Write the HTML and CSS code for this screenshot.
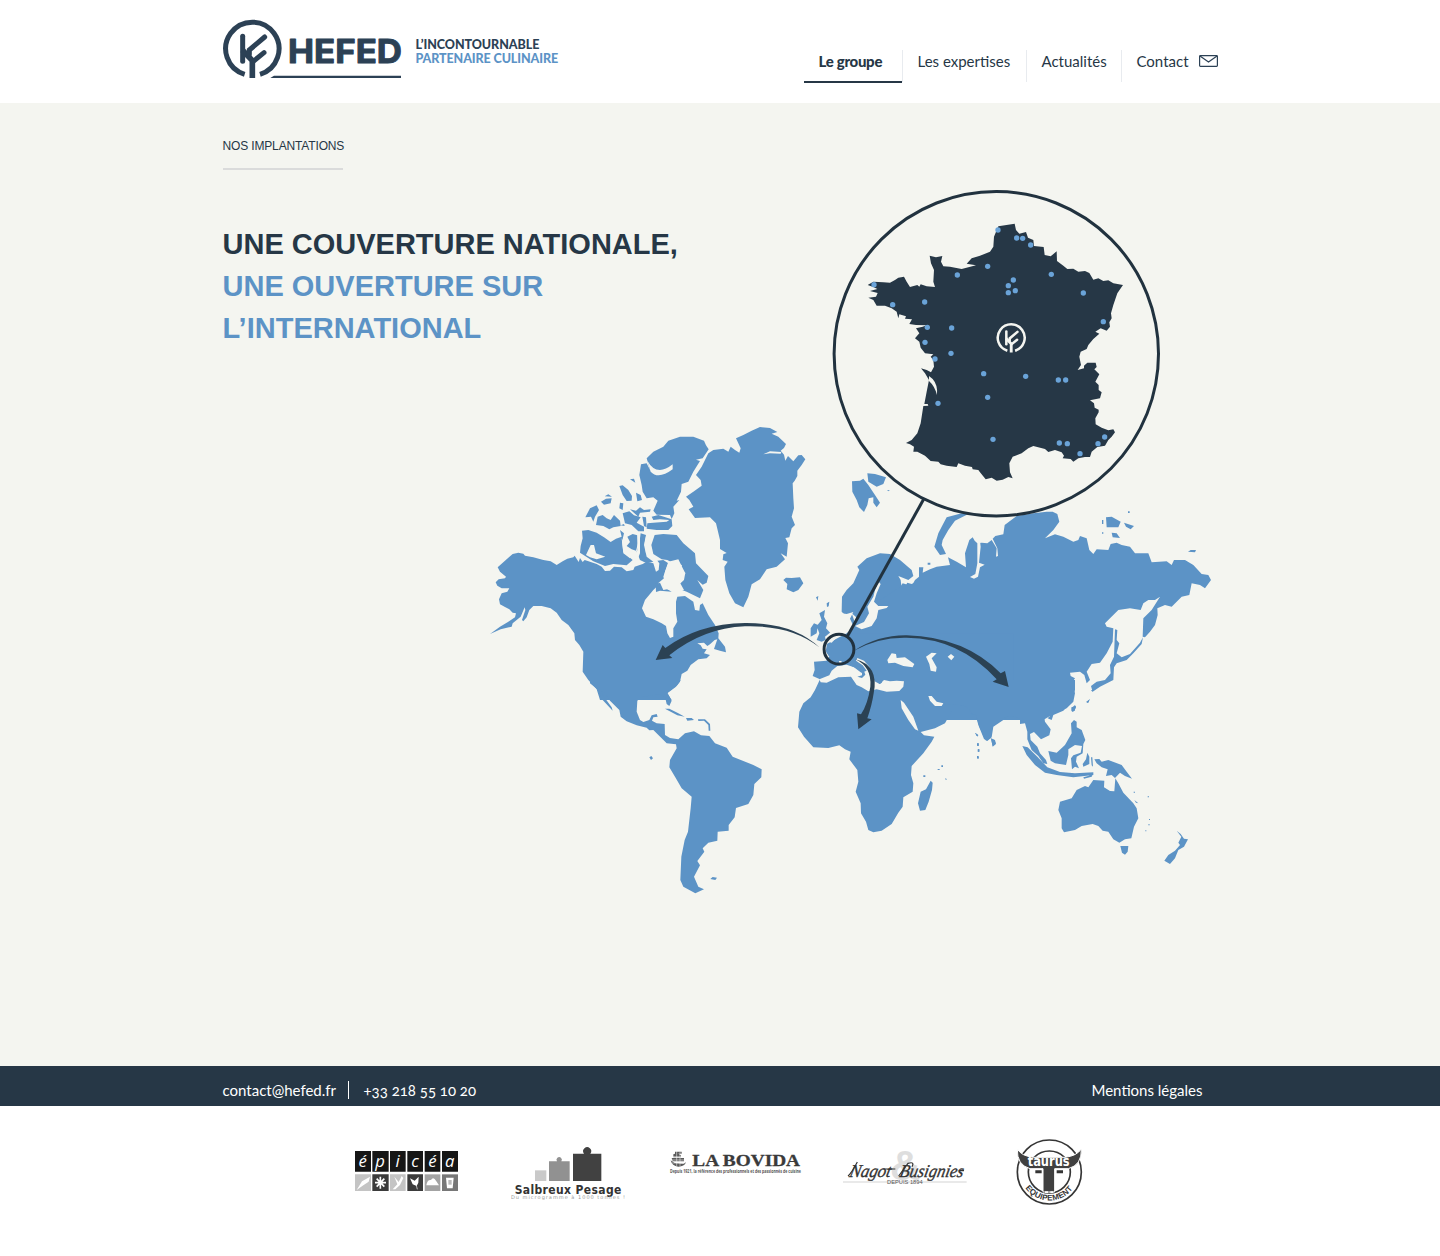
FILE: index.html
```html
<!DOCTYPE html>
<html lang="fr">
<head>
<meta charset="utf-8">
<title>Hefed – Nos implantations</title>
<link rel="stylesheet" href="styles.css">
</head>
<body>
<header class="header">
  <div class="wrap header-row">
    <a class="brand">
      <svg class="brand-logo" viewBox="39 60 534 174">
        <defs>
          <g id="emblem" fill="none" stroke="currentColor" stroke-width="15">
            <path d="M104 223A80 80 0 1 1 150 223"/>
            <path d="M127 234V182L97 150" stroke-width="17"/>
            <path d="M98 109V184" stroke-linecap="round"/>
            <path d="M118 163V150L164 111M130 184L162 158" stroke-linecap="round"/>
          </g>
        </defs>
        <use href="#emblem"/>
        <text class="wordmark" x="234" y="189" textLength="342" lengthAdjust="spacingAndGlyphs">HEFED</text>
        <path d="M181 234L192 227H573V234Z" fill="currentColor"/>
      </svg>
      <span class="tagline"><span class="tag-a">L’INCONTOURNABLE</span><span class="tag-b">PARTENAIRE CULINAIRE</span></span>
    </a>
    <nav class="nav">
      <a class="nav-item nav-active">Le groupe</a>
      <a class="nav-item nav-expertises">Les expertises</a>
      <a class="nav-item nav-news">Actualités</a>
      <a class="nav-item nav-contact">Contact
        <svg class="mail" viewBox="0 0 19 12"><rect x=".6" y=".6" width="17.8" height="10.8" rx=".8"/><path d="M1 1L9.5 7L18 1"/></svg>
      </a>
    </nav>
  </div>
</header>

<main class="main">
  <div class="wrap stage">
    <div class="intro">
      <h2 class="kicker">NOS IMPLANTATIONS</h2>
      <h1 class="title"><span class="t1">UNE COUVERTURE NATIONALE,</span><span class="t2">UNE OUVERTURE SUR</span><span class="t3">L’INTERNATIONAL</span></h1>
    </div>
    <svg class="map" viewBox="480 180 740 730">
      <!-- North America and the Arctic islands -->
      <g transform="translate(480 420) scale(.33333)" class="land">
        <path d="M30 642L60 620 85 605 105 592 108 580 98 578 88 568 75 561 60 553 57 538 65 520 82 515 88 505 65 505 52 497 47 487 56 478 75 475 78 470 60 455 53 442 75 422 98 402 115 398 130 401 135 407 160 412 190 420 212 424 230 435 248 424 262 416 280 412 284 407 296 426 300 414 308 426 314 420 330 425 350 432 365 440 375 453 390 452 402 440 425 442 440 454 460 450 464 440 488 432 500 425 520 430 528 455 536 450 538 430 532 422 550 420 565 430 555 455 552 475 536 488 530 500 520 510 495 540 486 565 498 590 520 598 545 610 558 618 562 640 570 654 580 650 580 625 592 605 588 580 588 545 592 530 615 528 640 545 645 570 658 572 660 555 668 550 685 585 705 615 716 640 715 655 735 680 738 697 720 692 702 687 712 658 704 660 690 673 682 678 672 668 652 670 662 676 668 686 680 688 672 700 690 705 680 715 655 718 632 735 622 752 605 762 600 785 588 800 562 820 575 840H360L350 808 325 780 308 755 310 695 298 675 285 660 283 640 265 615 245 600 230 578 212 565 185 558 160 558 148 570 140 592 130 604 126 600 136 570 134 562 122 590 98 610 95 620 62 628Z"/>
        <path d="M500 115L520 95 550 80 565 62 600 50 640 50 672 62 678 76 686 88 668 115 648 119 660 123 640 155 625 185 605 192 603 215 590 242 598 240 580 260 583 280 575 297 570 285 530 284 520 272 533 242 520 232 500 235 488 215 485 195 478 165 483 133 500 130 510 150Z"/>
        <path d="M306 332L325 330 350 338 372 352 392 366 408 356 425 350 420 330 432 340 426 365 430 395 440 405 458 420 440 436 400 432 375 438 340 424 300 398 302 378 308 355Z"/>
        <path d="M442 350L458 342 472 346 474 370 468 392 455 388 440 378 450 366ZM482 340L498 345 492 375 500 410 520 425 500 430 480 420 470 395 478 370Z"/>
        <path d="M524 345L550 342 590 345 610 370 645 400 648 430 685 468 680 488 668 494 652 480 670 510 660 535 620 515 600 508 590 500 612 480 616 458 598 455 606 435 580 430 562 420 545 418 520 402 514 375Z"/>
        <path d="M527 492L540 488 550 510 562 508 575 515 540 512 528 516Z"/>
        <path d="M316 292L330 265 350 256 357 270 345 290 340 305 333 290ZM353 290L368 285 380 295 392 300 402 285 420 302 422 318 400 322 388 328 370 318 348 315ZM363 245L378 236 395 235 392 250 372 254ZM374 229L385 223 396 230ZM418 198L428 196 445 210 456 228 455 242 440 243 428 225ZM450 178L462 176 466 188ZM468 218L482 225 486 240 472 244ZM420 248L430 250 428 270 418 265ZM428 280L448 274 462 286 482 292 470 308 492 320 492 334 475 334 455 315 435 310ZM450 268L468 272 480 262 492 270 512 268 510 275 480 278 475 290ZM422 316l10 -4 2 6ZM487 290L498 292 500 322 492 318ZM515 290L535 285 575 298 577 318 565 330 530 330 500 326 502 310 520 308 560 305 568 300 540 298 520 300Z"/>
      </g>
      <g transform="translate(480 420) scale(.33333)" class="water">
        <path d="M502 122Q530 172 578 133L578 148Q535 180 512 155ZM318 405L332 375 342 375 348 400 376 410 350 418 330 412ZM500 338L512 345 500 380 515 410 535 425 520 420 498 400 494 370ZM425 355L435 375 445 395 460 400 450 415 430 400ZM472 345L480 345 480 400 470 425 462 425 472 390ZM550 470L565 425 595 418 606 440 616 460 600 488 612 510 590 515 562 508Z"/>
        <path d="M480 250l20 -4 -4 8ZM506 256l5 -5 4 7Z"/>
      </g>
      <!-- Greenland, Iceland, Svalbard, British Isles, western Europe -->
      <g transform="translate(660 420) scale(.33333)" class="land">
        <path d="M108 165L125 140 145 100 160 90 190 86 205 95 212 80 225 90 238 98 242 85 228 55 250 45 275 32 300 21 330 24 352 36 335 41 355 50 378 72 372 84 362 92 372 104 376 122 384 108 400 124 415 106 425 105 436 118 425 135 412 152 412 168 404 182 398 190 400 235 402 265 395 290 405 315 395 325 388 352 376 354 384 370 380 410 362 400 375 418 350 440 320 448 300 478 275 493 265 530 250 562 225 550 208 520 196 480 193 440 203 425 188 420 190 403 200 399 180 387 180 360 168 310 150 292 105 294 86 268 100 260 88 240 78 230 100 215 125 197 122 180Z"/>
        <path d="M370 480L378 473 395 474 420 472 430 490 415 510 400 517 380 508 382 492ZM576 184L600 182 610 176 625 195 645 225 660 248 650 262 640 248 640 232 626 235 622 255 612 276 598 262 590 240 577 215ZM622 160L645 162 678 172 670 192 650 200 625 185ZM682 210l8 1 -6 3ZM468 532l7 -4 -2 14ZM500 550l8 -5 -2 14 -5 2Z"/>
        <path d="M478 580L495 570 492 590 502 610 498 625 512 640 508 655 485 665 470 660 478 640 470 618 485 600ZM452 625L462 610 474 615 470 640 452 650Z"/>
        <path d="M545 575L546 530 560 510 580 490 598 450 592 440 620 415 660 400 690 402 720 420 755 450 760 468 745 480 715 468 722 480 725 505 735 500 742 488 755 492 780 480V700H495L505 662 525 655 545 640 560 640 562 600 555 585Z"/>
      </g>
      <!-- Russia and northern Asia -->
      <g transform="translate(900 500) scale(.33333)" class="land">
        <path d="M-60 300L0 262 8 250 35 258 45 240 57 230 57 202 70 202 68 218 90 208 110 200 150 195 144 172 170 185 198 202 195 160 208 120 218 112 224 122 232 130 245 128 262 130 275 120 290 145 288 170 294 168 292 145 278 116 286 108 310 103 314 75 350 48 400 40 440 35 458 35 472 42 478 65 460 90 435 115 465 103 490 110 520 125 535 120 540 108 560 115 568 150 580 162 590 148 625 150 632 132 650 128 665 135 690 140 705 160 745 160 755 187 800 184 815 195 822 180 855 180 880 195 905 222 925 225 933 240 915 265 900 255 875 250 868 285 845 290 815 320 795 315 772 325 773 345 765 375 750 395 735 412 728 410 730 355 755 330 780 290 765 300 745 300 730 310 722 330 690 325 655 330 615 370 620 380 640 385 638 425 620 460 600 488 575 492 560 515 570 540 560 550 553 525 540 515 510 518 512 528 525 535 515 550 525 580 520 605 500 625 455 645 430 660H-60Z"/>
        <path d="M645 388L652 390 650 420 658 430 650 460 665 472 690 462 720 428 729 412 725 432 700 460 680 480 650 490 642 502 640 540 600 560 578 575 573 558 590 545 615 540 632 520 630 495 642 470Z"/>
        <path d="M205 42L165 62 145 90 128 120 125 135 138 162 120 165 103 140 115 100 125 80 140 52 185 40ZM83 188h8v6h-8ZM618 52L635 50 662 65 655 82 620 82ZM672 68L702 78 692 88 678 80ZM684 34h5v5h-5ZM606 60h4v12h-4ZM635 98L650 100 660 114 638 112ZM606 97h4v4h-4ZM864 155L872 150 888 150 885 157ZM514 622L528 618 524 632 516 636ZM558 606L569 598 564 608Z"/>
      </g>
      <!-- Africa, Middle East, India -->
      <g transform="translate(780 640) scale(.33333)" class="land">
        <path d="M102 65L104 90 98 108 120 118 105 150 92 172 70 190 58 215 54 262 72 290 100 322 145 324 178 316 195 328 212 335 208 358 232 390 235 425 227 455 242 490 243 520 258 545 265 570 280 577 305 572 335 552 355 518 368 500 370 472 398 455 400 430 393 405 395 378 430 340 455 305 463 290 432 286 422 276 465 265 495 250 514 215 490 192 550 196 575 222 587 225 595 255 612 297 622 303 635 292 640 260 700 220V-20H180L140 10 140 62Z"/>
        <path d="M452 422L458 428 456 450 446 485 436 510 420 512 414 490 422 455 438 448ZM633 295L645 300 648 312 638 320ZM585 278L595 285 592 290ZM591 310h5v7h-5ZM593 328h5v7h-5ZM591 348h5v7h-5ZM430 406h6v5h-6ZM473 387h6v3h-6ZM484 376h5v5h-5ZM496 414l5 4 -4 2Z"/>
      </g>
      <!-- Central and South America -->
      <g transform="translate(590 680) scale(.33333)" class="land">
        <path d="M0 0V10L22 28 28 42 38 60 68 92 65 82 38 45 35 34 42 36 60 62 88 90 92 110 110 124 140 136 170 143 178 151 190 150 212 172 230 190 258 193 260 205 240 240 238 262 255 290 275 325 305 350 302 385 294 455 284 480 274 530 271 600 280 620 316 640 342 628 325 620 312 590 330 556 322 543 343 515 338 505 355 488 382 482 383 455 416 452 416 435 434 412 438 384 475 372 490 345 493 312 514 292 515 268 490 255 428 230 410 203 375 190 358 168 333 166 312 154 285 160 265 178 240 174 225 165 224 132 200 130 186 122 190 112 203 110 200 102 185 106 178 120 160 126 150 120 140 95 142 62 155 50 180 47 205 42 225 50 230 72 238 78 245 62 232 38 262 15 272 0Z"/>
        <path d="M225 86L238 86 265 100 284 110 262 106ZM288 114L305 114 312 120 292 122ZM324 118L345 118 360 132 361 152 356 152 355 135 342 122 325 123ZM178 232l6 -4 5 7 -6 5ZM361 597L368 591 381 593 376 600Z"/>
      </g>
      <!-- South-East Asia and Oceania -->
      <g transform="translate(960 690) scale(.33333)" class="land">
        <path d="M0 -30V45L20 50 38 72 48 75 58 110 78 152 92 145 98 108 140 80 165 78 180 88 180 102 195 100 202 125 202 148 215 180 235 198 250 220 262 222 258 210 240 190 232 170 212 150 210 132 222 126 243 148 268 136 272 118 255 95 252 78 265 72 270 78 263 85 275 90 280 75 310 62 335 35 345 0 345 -30Z"/>
        <path d="M187 168L203 172 232 200 262 232 300 246 345 250 400 247 400 255 340 262 290 255 255 248 225 225 200 195ZM265 183L290 188 315 165 335 130 333 100 342 90 350 95 350 112 365 120 376 150 370 162 368 190 350 200 348 215 357 235 345 230 336 238 333 205 340 196 362 188 366 168 345 165 325 178 325 195 318 225 285 220 272 212ZM382 188L388 200 388 222 370 230 368 222 378 208ZM393 202l4 0 2 28 -4 -4ZM370 262L398 254 395 260 372 266Z"/>
        <path d="M403 208L418 207 425 215 445 210 485 225 500 245 516 266 495 258 480 248 465 264 455 255 438 258 443 238 425 232 410 220Z"/>
        <path d="M300 335L335 325 350 300 375 288 385 292 400 270 433 272 432 292 450 303 463 304 466 265 475 280 490 308 520 340 530 355 535 385 522 410 514 445 495 448 478 458 460 448 445 425 428 422 415 408 398 402 365 408 345 420 312 427 305 415 305 385 295 360Z"/>
        <path d="M481 468L505 468 503 485 495 494 486 488ZM650 422L662 432 672 446 684 448 672 470 655 480 645 505 630 522 613 512 625 495 645 482 660 465 655 458 664 440ZM335 55L345 45 348 52 342 64 334 62ZM380 38L390 26 385 38ZM393 0h10l-6 5ZM523 330L535 340 528 338ZM521 305h4v3h-4ZM563 319h4v3h-4ZM567 387h3v3h-3ZM565 403h4v3h-4ZM556 421h3v3h-3ZM93 146L102 150 107 160 98 168ZM45 128L55 136 50 138ZM52 160h4v8h-4ZM54 178h4v7h-4ZM52 200h4v6h-4Z"/>
      </g>
      <!-- Seas and lakes cut into the land -->
      <g transform="translate(660 420) scale(.33333)" class="water">
        <path d="M655 484L662 492 650 520 642 545 655 558 685 558 680 564 655 570 650 595 635 618 605 628 585 618 598 612 612 606 627 580 622 560 640 530 645 510ZM545 580L560 582 580 576 570 596 582 622 560 640 500 672 495 650 520 630 545 620ZM575 580l14 12 -4 16ZM310 103L330 94 364 96 362 101 330 100Z"/>
        <path d="M500 664L515 650 530 652 515 668ZM498 694l8 16 -4 8Z"/>
      </g>
      <g transform="translate(900 500) scale(.33333)" class="water">
        <path d="M232 130L240 122 242 140 237 188 254 194 240 202 234 230 222 236 210 231 226 222 232 190Z"/>
      </g>
      <g transform="translate(780 640) scale(.33333)">
        <path class="water" d="M118 118L148 106 155 92 172 78 200 74 222 82 244 98 260 92 248 76 228 62 232 54 252 62 268 80 272 105 286 125 300 132 312 120 330 124 350 122 372 124 370 140 358 153 320 155 290 148 265 154 245 142 230 135 213 110 175 112 140 128 122 127ZM322 60L335 40 348 42 350 54 375 52 403 72 398 82 370 78 345 68 325 70ZM438 50L455 38 470 40 455 55 470 82 468 95 452 92 448 72ZM503 50l10 -8 10 8 -9 11ZM362 180L372 188 400 230 415 272 405 268 385 240 365 205ZM445 168L455 168 470 185 490 190 485 198 465 198 450 182ZM177 63h8l-2 8h-5ZM134 32L148 50 142 55Z"/>
        <path class="land" d="M215 58L232 68 252 92 256 104 246 114 232 110 246 106 246 98 228 84 210 76ZM292 126l10 -6 4 8 -8 4Z"/>
      </g>
      <!-- Zoom lens and its connector -->
      <circle class="lens" cx="996.3" cy="353.8" r="162.2"/>
      <path class="link" d="M923.5 499.500L847 637"/>
      <circle class="origin" cx="839" cy="649.200" r="14.900"/>
      <!-- Flows out of France -->
      <g class="flow">
        <path transform="translate(660 420) scale(.33333)" d="M478 682Q400 608 255 609Q115 611 16 684L8 675-13 720 37 714 28 706Q130 624 255 619Q395 615 478 682Z"/>
        <path transform="translate(900 500) scale(.33333)" d="M-138 452Q-65 405 20 406Q195 411 302 520L315 513 326 561 278 545 290 538Q180 415 20 413Q-65 411 -138 452Z"/>
        <path transform="translate(780 640) scale(.33333)" d="M225 57Q298 76 281 160Q276 195 262 235L275 238 235 268 231 220 243 223Q264 190 271 140Q276 80 225 57Z"/>
      </g>
      <!-- France -->
      <g transform="translate(830 185) scale(.33333)">
        <path class="france" d="M505 124L554 116 558 135 568 146 588 141 594 158 610 165 612 183 641 186 644 210 662 214 680 199 681 228 700 242 712 252 730 251 745 260 765 258 778 264 790 284 805 280 820 288 835 286 850 295 879 300 862 325 850 360 843 385 845 400 838 412 840 425 830 437 812 430 796 440 808 446 790 462 775 480 770 492 752 500 748 515 753 540 743 555 762 550 762 542 772 533 797 533 800 546 793 553 808 568 796 590 806 600 806 615 815 622 810 640 780 646 792 655 794 668 806 674 806 682 796 700 797 718 815 728 835 736 850 733 855 742 845 755 835 765 825 782 802 786 785 800 780 816 765 816 745 820 730 830 722 822 698 820 702 812 695 802 675 795 655 801 645 792 610 783 595 790 575 805 548 815 538 835 540 862 548 880 535 876 518 884 500 887 485 878 467 883 450 862 445 855 428 853 426 846 405 842 385 835 380 846 350 842 332 838 325 830 302 828 285 812 262 800 250 800 252 785 240 778 228 774 245 765 262 745 272 715 280 663 295 662 293 657 283 657 290 620 297 585 285 565 273 550 290 555 303 562 312 545 310 525 302 515 310 508 285 505 272 488 268 470 255 460 268 445 258 430 278 425 290 421 258 420 238 417 246 403 225 401 228 394 208 388 205 400 200 380 185 370 165 362 140 362 130 345 115 338 138 335 143 324 120 318 142 312 130 306 113 300 130 290 160 292 180 293 195 285 205 278 222 275 230 290 240 306 262 300 268 305 272 298 290 304 315 306 310 290 312 255 303 235 299 212 318 217 337 213 333 230 340 244 360 245 395 252 438 241 410 236 425 220 450 212 480 200 490 185 492 155Z"/>
        <path class="water" d="M297 573L308 582Q324 600 321 630Q314 603 297 588Z"/>
        <g class="sites">
          <circle cx="504" cy="135" r="8"/><circle cx="560" cy="159" r="8"/><circle cx="578" cy="160" r="8"/><circle cx="602" cy="180" r="8"/><circle cx="473" cy="244" r="8"/><circle cx="382" cy="270" r="8"/><circle cx="550" cy="285" r="8"/><circle cx="535" cy="302" r="8"/><circle cx="556" cy="317" r="8"/><circle cx="535" cy="323" r="8"/><circle cx="664" cy="268" r="8"/><circle cx="760" cy="324" r="8"/><circle cx="820" cy="410" r="8"/><circle cx="132" cy="299" r="8"/><circle cx="188" cy="359" r="8"/><circle cx="284" cy="351" r="8"/><circle cx="292" cy="427" r="8"/><circle cx="365" cy="429" r="8"/><circle cx="285" cy="472" r="8"/><circle cx="363" cy="505" r="8"/><circle cx="315" cy="522" r="8"/><circle cx="461" cy="566" r="8"/><circle cx="587" cy="574" r="8"/><circle cx="685" cy="585" r="8"/><circle cx="707" cy="585" r="8"/><circle cx="473" cy="637" r="8"/><circle cx="324" cy="655" r="8"/><circle cx="489" cy="763" r="8"/><circle cx="688" cy="774" r="8"/><circle cx="712" cy="776" r="8"/><circle cx="824" cy="756" r="8"/><circle cx="804" cy="776" r="8"/><circle cx="750" cy="806" r="8"/>
        </g>
        <use class="emblem-light" href="#emblem" transform="translate(479.500 384.500) scale(.505)"/>
      </g>
    </svg>
  </div>
</main>

<div class="contact-bar">
  <div class="wrap contact-row">
    <a class="mail-link">contact@hefed.fr</a>
    <span class="phone">+33 218 55 10 20</span>
    <a class="legal">Mentions légales</a>
  </div>
</div>

<footer class="partners">
  <svg viewBox="45 27 468 201" class="epicea">
    <g fill="#161616"><path d="M45 63h48v62H45zM97 63h49v62H97zM150 63h47v62h-47zM202 63h47v62h-47zM254 63h47v62h-47zM306 63h48v62h-48z"/></g>
    <path fill="#c4c4c4" d="M45 133h48v50H45zM150 133h47v50h-47z"/>
    <path fill="#3b3b3b" d="M97 133h49v50H97zM202 133h47v50h-47z"/>
    <path fill="#a3a3a3" d="M254 133h47v50h-47z"/><path fill="#777" d="M306 133h48v50h-48z"/>
    <g class="epicea-text"><text x="68" y="112">é</text><text x="120" y="112">p</text><text x="173" y="112">i</text><text x="225" y="112">c</text><text x="277" y="112">é</text><text x="329" y="112">a</text></g>
    <g fill="#fff"><path d="M50 180L66 154 90 140 86 155 70 166ZM158 178L172 163 163 140 176 156 185 138 190 144 180 165 166 178ZM210 145L224 152 236 140 235 158 230 168 218 163ZM259 166Q262 148 273 150Q280 138 289 154L297 166ZM318 143H341L338 175H321Z"/></g>
    <path d="M121 140V176M105 158H138M110 146L133 170M133 146L110 170" stroke="#fff" stroke-width="5"/><path d="M229 166L232 178" stroke="#fff" stroke-width="2"/><path d="M325 150h10v14h-10z" fill="#bbb"/>
  </svg>
  <svg viewBox="513 27 474 201" class="salbreux">
    <path fill="#c9c9c9" d="M585 121h34v32h-34z"/>
    <path fill="#919191" d="M627 94H651A8 8 0 1 1 664 94H689V153H627Z"/>
    <path fill="#414141" d="M699 71H732A12 12 0 1 1 751 71H784V153H699Z"/>
    <text class="sal-name" x="524" y="192" textLength="320">Salbreux Pesage</text>
    <text class="sal-sub" x="513" y="208" textLength="342">Du microgramme à 1000 tonnes !</text>
  </svg>
  <svg viewBox="27 27 522 201" class="bovida">
    <path d="M32 91Q36 108 55 110Q73 110 78 97L70 101 44 99ZM40 73Q52 67 63 76V82H40ZM35 84H72V94H38ZM45 65H65V71H45Z" fill="#5a5a5a"/>
    <path d="M36 80H75M33 90H76M36 99H74M50 63V108M60 65V108" stroke="#fff" stroke-width="1.500"/>
    <text class="bov-name" x="97" y="107" textLength="323" lengthAdjust="spacingAndGlyphs">LA BOVIDA</text>
    <text class="bov-sub" x="30" y="130" textLength="393" lengthAdjust="spacingAndGlyphs">Depuis 1921, la référence des professionnels et des passionnés de cuisine</text>
  </svg>
  <svg viewBox="549 27 519 201" class="nagot">
    <text class="nag-amp" x="690" y="151" textLength="92" lengthAdjust="spacingAndGlyphs">&amp;</text>
    <path d="M549 156H920" stroke="#e2e2e2" stroke-width="4"/>
    <g class="nag-name"><text transform="translate(566 141) skewX(-12)" textLength="124" lengthAdjust="spacingAndGlyphs">Nagot</text><text transform="translate(716 141) skewX(-12)" textLength="192" lengthAdjust="spacingAndGlyphs">Busignies</text></g>
    <path d="M564 138Q574 130 592 96M670 117H706M716 138L744 100Q765 94 756 110M896 122H912" fill="none" stroke="#333" stroke-width="3.500"/>
    <text class="nag-sub" x="681" y="161" textLength="107" lengthAdjust="spacingAndGlyphs">DEPUIS 1894</text>
  </svg>
  <svg viewBox="1068 27 207 201" class="taurus">
    <defs><path id="taurus-arc" d="M1087 158A88 88 0 0 0 1249 158"/></defs>
    <circle cx="1168" cy="126" r="96" fill="#fff" stroke="#353535" stroke-width="5"/>
    <circle cx="1168" cy="126" r="63" fill="#fff" stroke="#353535" stroke-width="5"/>
    <path d="M1072 57Q1070 105 1110 116H1149V186H1184V116H1225Q1266 105 1264 57Q1250 78 1215 82H1120Q1084 78 1072 57Z" fill="#404040" stroke="#fff" stroke-width="3"/>
    <path d="M1126 121h19v9h-19zM1190 121h19v9h-19z" fill="#353535"/><path d="M1155 184h9v5h-9zM1171 184h9v5h-9z" fill="#fff"/>
    <text class="tau-name" x="1103" y="109" textLength="126" lengthAdjust="spacingAndGlyphs">taurus</text>
    <text class="tau-sub"><textPath href="#taurus-arc" startOffset="18" textLength="166">EQUIPEMENT</textPath></text>
  </svg>
</footer>
</body>
</html>
```
FILE: styles.css
```css
* { box-sizing: border-box; }
body {
  margin: 0;
  background: #fff;
  color: #263746;
  font-family: Lato, "Open Sans", sans-serif;
}
svg { display: block; }
.wrap { width: 995px; margin: 0 auto; }

.header { height: 103px; }
.header-row { display: flex; justify-content: space-between; }
.brand { display: flex; padding-top: 20px; color: #2c4155; }
.brand-logo { width: 178px; height: 58px; margin-right: 15px; overflow: visible; }
.wordmark { font: 700 98px Inter, sans-serif; fill: #2c4155; stroke: #2c4155; stroke-width: 3; stroke-linejoin: round; }
.tagline { padding-top: 18px; font-size: 12.5px; font-weight: 900; line-height: 14px; white-space: nowrap; }
.tagline span { display: block; }
.tag-a { letter-spacing: -0.05px; }
.tag-b { color: #5c93c6; letter-spacing: -0.1px; }

.nav { display: flex; padding-top: 50px; font-size: 15px; line-height: 22px; white-space: nowrap; }
.nav-item { height: 33px; padding-left: 15px; background: linear-gradient(#e8ebef, #e8ebef) right top / 1px 32px no-repeat; }
.nav-active { width: 99px; font-weight: 900; background: linear-gradient(#263746, #263746) left bottom / 98px 2px no-repeat, linear-gradient(#e8ebef, #e8ebef) right top / 1px 32px no-repeat; letter-spacing: -0.3px; }
.nav-expertises { width: 124px; }
.nav-news { width: 95px; }
.nav-contact { display: flex; width: 96px; justify-content: space-between; background: none; }
.mail { width: 19px; height: 12px; margin-top: 5px; fill: none; stroke: #2c4155; stroke-width: 1.2; }

.main { height: 963px; background: #f4f5f0; }
.stage { display: grid; grid-template-columns: 257px 1fr; }
.intro { grid-area: 1 / 1 / 2 / 3; padding-top: 35px; }
.kicker {
  width: 120px;
  height: 32px;
  margin: 0;
  border-bottom: 2px solid #dadbdb;
  font: 400 12px/17px "Liberation Sans", Arial, sans-serif;
  letter-spacing: -0.15px;
  white-space: nowrap;
}
.title { margin: 53px 0 0; font: 700 29px/42px "Liberation Sans", Arial, sans-serif; white-space: nowrap; }
.title span { display: block; }
.t2, .t3 { color: #5c93c6; }
.map { grid-area: 1 / 2 / 2 / 3; width: 740px; height: 730px; margin-top: 77px; }
.land { fill: #5c93c6; }
.water { fill: #f4f5f0; }
.france { fill: #263746; }
.sites { fill: #6aa3d8; }
.emblem-light { color: #f4f5f0; }
.lens, .origin, .link { fill: none; stroke: #21323f; stroke-width: 3; }
.flow { fill: #2b4254; }

.contact-bar { height: 40px; background: #263746; color: #fff; }
.contact-row { display: flex; padding: 15px 15px 0 0; font-size: 15px; line-height: 18px; }
.mail-link { width: 126px; border-right: 1px solid #fff; }
.phone { padding-left: 15px; font-feature-settings: "onum"; }
.legal { margin-left: auto; }

.partners { display: grid; grid-template-columns: 156px 158px 174px 173px 69px; width: 730px; height: 150px; margin: 0 auto; padding-top: 33px; }
.partners svg { width: 100%; height: 67px; }
.epicea-text { font: italic 400 50px "Open Sans", sans-serif; fill: #fff; text-anchor: middle; }
.sal-name { font: 700 36px "DejaVu Sans Condensed", "DejaVu Sans", sans-serif; fill: #333; }
.sal-sub { font: 400 15px "DejaVu Sans", sans-serif; fill: #999; }
.bov-name { font: 700 52px "Liberation Serif", serif; fill: #3a3a3a; stroke: #3a3a3a; stroke-width: 1; }
.bov-sub { font: 700 14px "Open Sans", sans-serif; fill: #555; }
.nag-amp { font: 700 130px "Liberation Sans", sans-serif; fill: #dedede; }
.nag-name { font: italic 400 54px "Liberation Serif", serif; fill: #333; stroke: #333; stroke-width: 1; }
.nag-sub { font: 400 14px "Liberation Sans", sans-serif; fill: #555; }
.tau-name { font: 700 40px "DejaVu Sans", sans-serif; fill: #fff; }
.tau-sub { font: 700 24px "Liberation Sans", sans-serif; fill: #353535; }
```
